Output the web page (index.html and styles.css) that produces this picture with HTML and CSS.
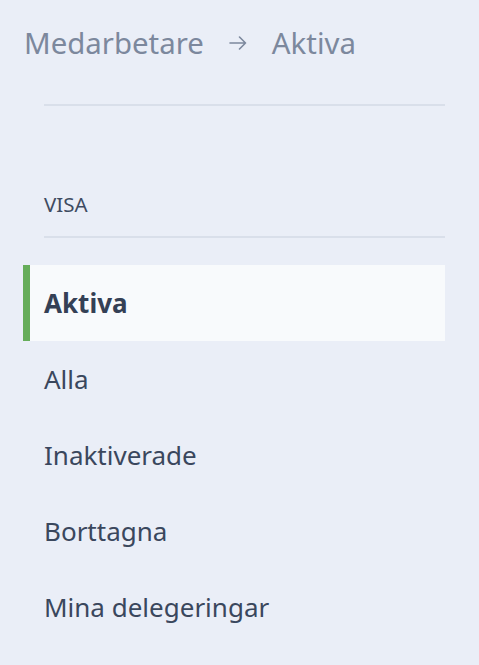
FILE: index.html
```html
<!DOCTYPE html>
<html lang="sv">
<head>
<meta charset="utf-8">
<link rel="stylesheet" href="styles.css">
</head>
<body>
<div class="page">
  <nav class="crumbs">
    <span class="crumb">Medarbetare</span>
    <svg class="sep" width="18" height="14" viewBox="0 0 18 14" aria-hidden="true">
      <path d="M1 7H16.5M10.5 1L16.5 7L10.5 13" fill="none" stroke="currentColor" stroke-width="1.6" stroke-linecap="round" stroke-linejoin="round"/>
    </svg>
    <span class="crumb">Aktiva</span>
  </nav>
  <div class="divider top"></div>
  <div class="section-title">VISA</div>
  <div class="divider"></div>
  <ul class="menu">
    <li class="item active">Aktiva</li>
    <li class="item">Alla</li>
    <li class="item">Inaktiverade</li>
    <li class="item">Borttagna</li>
    <li class="item">Mina delegeringar</li>
  </ul>
</div>
</body>
</html>
```
FILE: styles.css
```css
html, body {
  margin: 0;
  padding: 0;
  background: #eaeef7;
  font-family: "Noto Sans", sans-serif;
}
.page {
  width: 479px;
  height: 665px;
  overflow: hidden;
}
.crumbs {
  display: flex;
  align-items: center;
  padding: 23px 0 0 24px;
  height: 40px;
  color: #7c889d;
  font-size: 29.4px;
}
.sep {
  margin: 0 25px 0 25px;
  flex: none;
}
.divider {
  margin: 0 34px 0 44px;
  height: 2px;
  background: #d9dfea;
}
.divider.top {
  margin-top: 41px;
}
.section-title {
  margin: 84px 0 0 44px;
  padding-bottom: 18px;
  font-size: 20.5px;
  line-height: 28px;
  color: #3e4b61;
}
.menu {
  list-style: none;
  margin: 27px 34px 0 23px;
  padding: 0;
}
.item {
  height: 76px;
  display: flex;
  align-items: center;
  border-left: 7px solid transparent;
  padding-left: 14px;
  font-size: 26px;
  color: #3a475d;
  box-sizing: border-box;
}
.item.active {
  border-left-color: #66ad5a;
  background: #f8fafc;
  font-weight: 700;
  color: #344055;
}
```
